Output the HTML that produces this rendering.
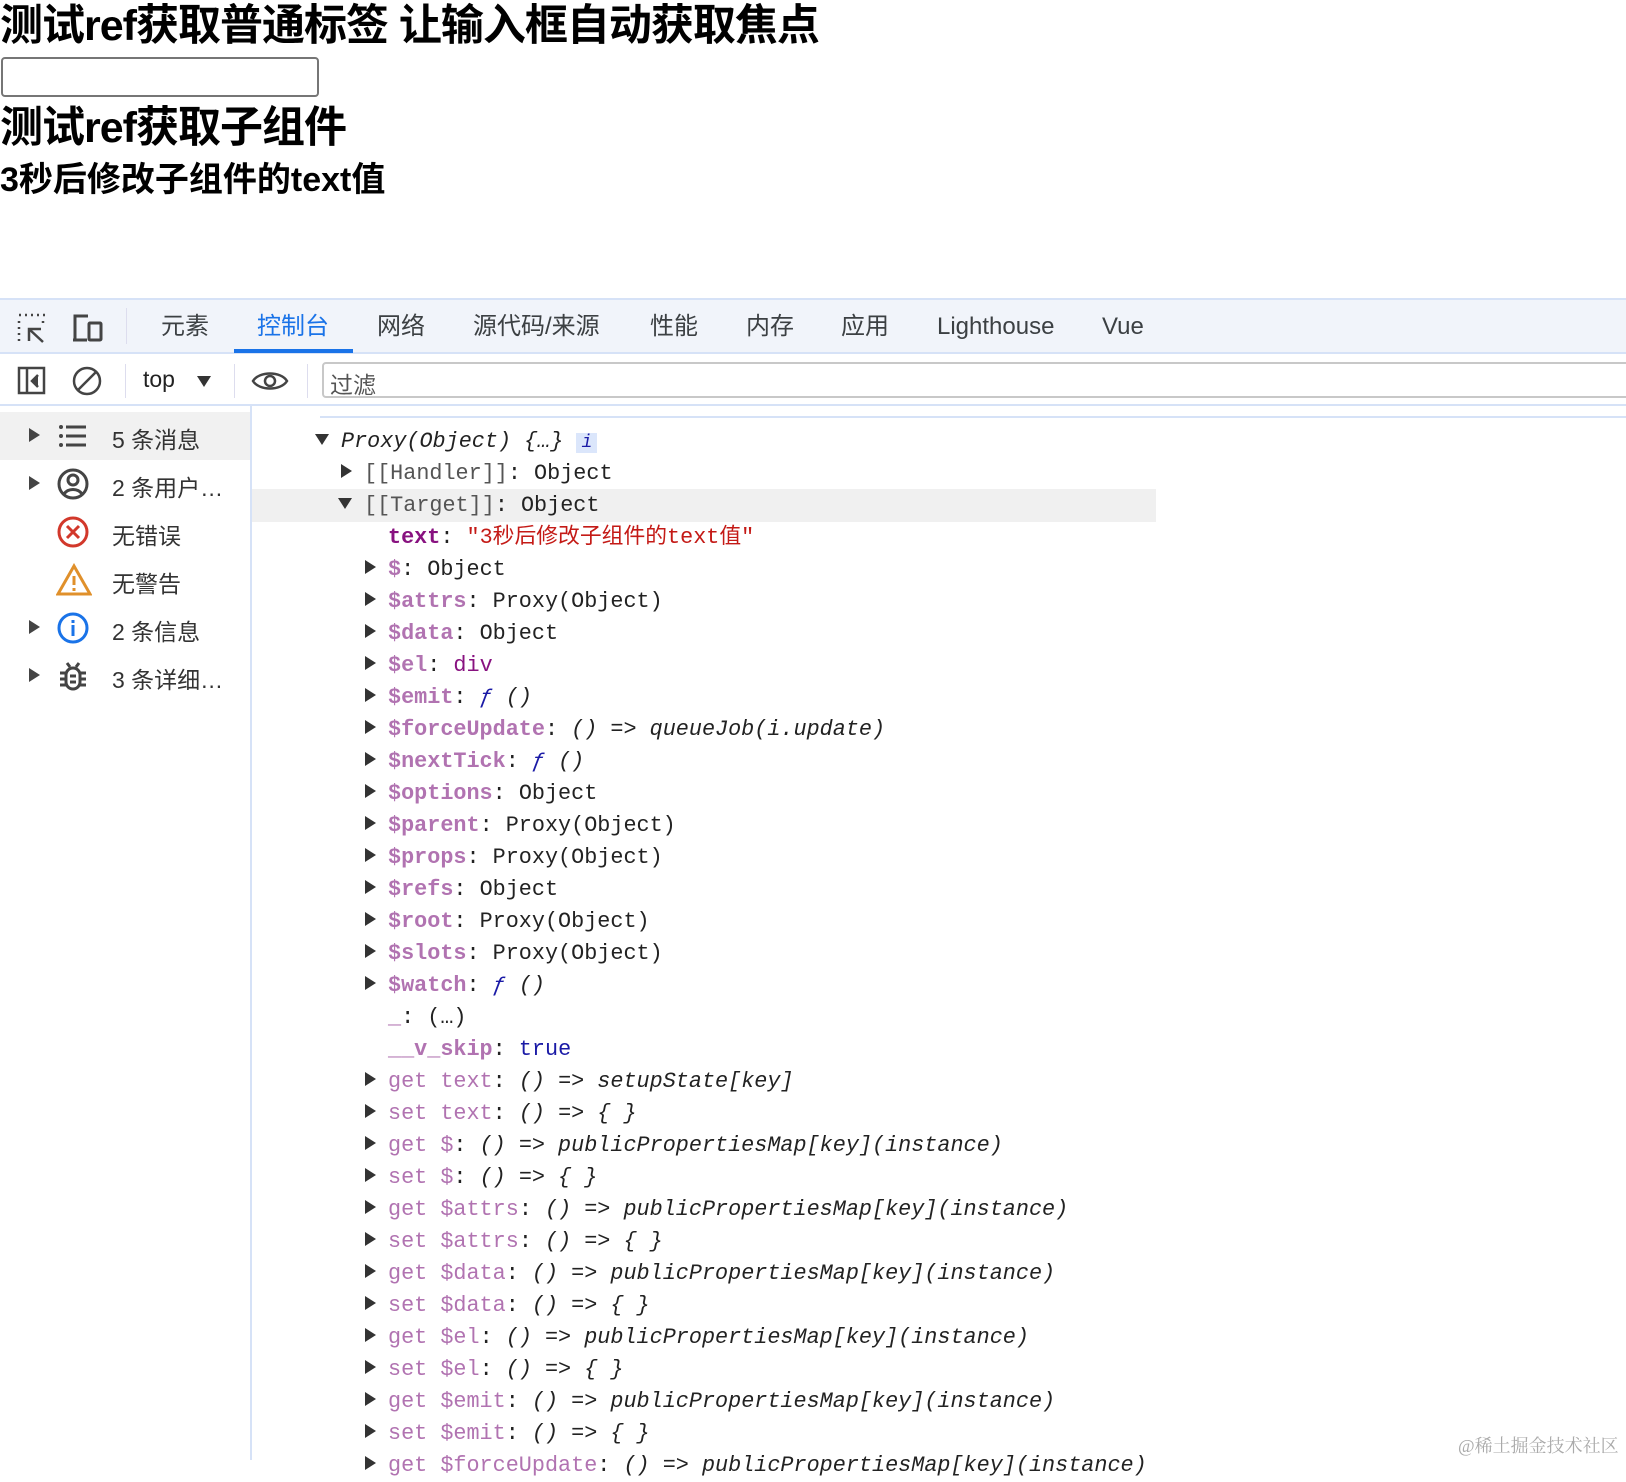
<!DOCTYPE html>
<html><head><meta charset="utf-8"><style>
*{box-sizing:border-box}
body{margin:0;width:1626px;height:1460px;overflow:hidden;background:#fff;font-family:"Liberation Sans","Noto Sans CJK SC",sans-serif;position:relative}
.a{position:absolute;white-space:nowrap}
h1,h3{margin:0;font-weight:bold;position:absolute;left:0;white-space:nowrap;letter-spacing:-1px}
.tab{position:absolute;top:312px;font-size:24px;color:#3c4043;line-height:30px}
.sb{position:absolute;left:0;width:250px;height:48px;font-size:23px;color:#333}
.sb .t{position:absolute;left:112px;top:9px}
.sb .ar{position:absolute;left:29px;top:16px;width:0;height:0;border-left:11px solid #444;border-top:7px solid transparent;border-bottom:7px solid transparent}
.sb svg{position:absolute;left:56px;top:7px}
.ln{position:absolute;font-family:"Liberation Mono","Noto Sans CJK SC",monospace;font-size:21.8px;line-height:32px;height:32px;white-space:nowrap;color:#222}
.tri{display:inline-block;width:0;height:0;border-left:11px solid #333;border-top:7px solid transparent;border-bottom:7px solid transparent;margin-right:12px;vertical-align:1px}
.trd{display:inline-block;width:0;height:0;border-top:11px solid #333;border-left:7px solid transparent;border-right:7px solid transparent;margin-right:12px;vertical-align:2px}
.k{color:#881280;font-weight:bold}
.kf{color:#b173b1;font-weight:bold}
.g{color:#b173b1}
.s{color:#c41a16}
.b{color:#1a1aa6}
i{font-style:italic}
.gr{color:#555}
</style></head><body>
<h1 style="top:0;font-size:43px;line-height:52px">测试ref获取普通标签 让输入框自动获取焦点</h1>
<div class="a" style="left:1px;top:57px;width:318px;height:40px;border:2px solid #767676;border-radius:4px"></div>
<h1 style="top:102px;font-size:43px;line-height:52px">测试ref获取子组件</h1>
<h3 style="top:160px;font-size:34px;line-height:40px;letter-spacing:0">3秒后修改子组件的text值</h3>

<!-- devtools -->
<div class="a" style="left:0;top:298px;width:1626px;height:56px;background:#f1f4fa;border-top:2px solid #d6e2f7;border-bottom:2px solid #d6e2f7"></div>
<svg class="a" style="left:16px;top:312px" width="32" height="32" viewBox="0 0 32 32" fill="none" stroke="#444" stroke-width="2.5"><path d="M3 3h2M9 3h2M15 3h2M21 3h2M27 3h2M3 9v2M3 15v2M3 21v2M3 27v2M27 9v2M13 29l0-12h12M13 17l14 13" /></svg>
<svg class="a" style="left:70px;top:312px" width="36" height="32" viewBox="0 0 36 32" fill="none" stroke="#444" stroke-width="3"><path d="M18 4H5v24h4M3 28h14"/><rect x="19" y="11" width="12" height="17" rx="1"/></svg>
<div class="a" style="left:126px;top:308px;width:1px;height:36px;background:#dde"></div>
<div class="tab" style="left:161px">元素</div>
<div class="tab" style="left:257px;color:#1a73e8">控制台</div>
<div class="a" style="left:234px;top:349px;width:119px;height:4px;background:#1a73e8"></div>
<div class="tab" style="left:377px">网络</div>
<div class="tab" style="left:473px">源代码/来源</div>
<div class="tab" style="left:650px">性能</div>
<div class="tab" style="left:746px">内存</div>
<div class="tab" style="left:841px">应用</div>
<div class="tab" style="left:937px">Lighthouse</div>
<div class="tab" style="left:1102px">Vue</div>

<div class="a" style="left:0;top:354px;width:1626px;height:52px;background:#fff;border-bottom:2px solid #d6e2f7"></div>
<svg class="a" style="left:17px;top:366px" width="30" height="30" viewBox="0 0 30 30" fill="none" stroke="#444" stroke-width="2.5"><rect x="2" y="2" width="25" height="25"/><path d="M10 2v25"/><path d="M21 9l-6 6 6 6" fill="#444"/></svg>
<svg class="a" style="left:71px;top:365px" width="32" height="32" viewBox="0 0 32 32" fill="none" stroke="#444" stroke-width="2.5"><circle cx="16" cy="16" r="13"/><path d="M7 25L25 7"/></svg>
<div class="a" style="left:125px;top:364px;width:1px;height:34px;background:#dde"></div>
<div class="a" style="left:143px;top:366px;font-size:23px;color:#222">top</div>
<div class="a" style="left:197px;top:376px;width:0;height:0;border-top:11px solid #333;border-left:7px solid transparent;border-right:7px solid transparent"></div>
<div class="a" style="left:234px;top:364px;width:1px;height:34px;background:#dde"></div>
<svg class="a" style="left:251px;top:368px" width="38" height="26" viewBox="0 0 38 26" fill="none" stroke="#444" stroke-width="2.5"><path d="M2 13C8 3 30 3 36 13C30 23 8 23 2 13Z"/><circle cx="19" cy="13" r="5"/></svg>
<div class="a" style="left:307px;top:364px;width:1px;height:34px;background:#dde"></div>
<div class="a" style="left:322px;top:362px;width:1320px;height:36px;border:2px solid #c8c8c8;border-radius:4px"></div>
<div class="a" style="left:330px;top:366px;font-size:23px;color:#555">过滤</div>

<!-- sidebar -->
<div class="a" style="left:250px;top:406px;width:2px;height:1054px;background:#d6e2f7"></div>
<div class="a" style="left:320px;top:416px;width:1306px;height:2px;background:#d6e2f7"></div>
<div class="sb" style="top:412px;background:#f1f1f1"><div class="ar"></div><svg width="34" height="34" viewBox="0 0 34 34" fill="#444"><circle cx="5" cy="8" r="2"/><circle cx="5" cy="17" r="2"/><circle cx="5" cy="26" r="2"/><rect x="10" y="6.5" width="20" height="3"/><rect x="10" y="15.5" width="20" height="3"/><rect x="10" y="24.5" width="20" height="3"/></svg><div class="t">5 条消息</div></div>
<div class="sb" style="top:460px"><div class="ar"></div><svg width="34" height="34" viewBox="0 0 34 34" fill="none" stroke="#444" stroke-width="3"><circle cx="17" cy="17" r="14"/><circle cx="17" cy="13" r="5"/><path d="M8 27c4-6 14-6 18 0"/></svg><div class="t">2 条用户…</div></div>
<div class="sb" style="top:508px"><svg width="34" height="34" viewBox="0 0 34 34" fill="none" stroke="#d2382b" stroke-width="3"><circle cx="17" cy="17" r="14"/><path d="M11 11l12 12M23 11L11 23"/></svg><div class="t">无错误</div></div>
<div class="sb" style="top:556px"><svg width="36" height="34" viewBox="0 0 36 34" fill="none" stroke="#e0902b" stroke-width="3"><path d="M18 3L34 31H2Z"/><path d="M18 13v9M18 25v3"/></svg><div class="t">无警告</div></div>
<div class="sb" style="top:604px"><div class="ar"></div><svg width="34" height="34" viewBox="0 0 34 34" fill="none" stroke="#1a73e8" stroke-width="3"><circle cx="17" cy="17" r="14"/><path d="M17 14v11M17 9v3"/></svg><div class="t">2 条信息</div></div>
<div class="sb" style="top:652px"><div class="ar"></div><svg width="34" height="34" viewBox="0 0 34 34" fill="none" stroke="#444" stroke-width="3"><path d="M11 4l3 4M23 4l-3 4"/><rect x="10" y="9" width="14" height="21" rx="7"/><path d="M4 14h6M24 14h6M4 20h6M24 20h6M4 26h6M24 26h6M14 17h6M14 23h6"/></svg><div class="t">3 条详细…</div></div>

<!-- console -->
<div class="a" style="left:252px;top:489px;width:904px;height:33px;background:#f0f0f0"></div>
<div class="ln" style="left:315px;top:426px"><span class="trd"></span><i>Proxy(Object) {…}</i> <span style="background:#dbe6fb;color:#1a1aa6;padding:0 5px;font-size:18px"><i>i</i></span></div>
<div class="ln" style="left:341px;top:458px"><span class="tri"></span><span class="gr">[[Handler]]</span>: Object</div>
<div class="ln" style="left:338px;top:490px"><span class="trd"></span><span class="gr">[[Target]]</span>: Object</div>
<div class="ln" style="left:388px;top:522px"><span class="k">text</span>: <span class="s">"3秒后修改子组件的text值"</span></div>
<div class="ln" style="left:365px;top:554px"><span class="tri"></span><span class="kf">$</span>: Object</div>
<div class="ln" style="left:365px;top:586px"><span class="tri"></span><span class="kf">$attrs</span>: Proxy(Object)</div>
<div class="ln" style="left:365px;top:618px"><span class="tri"></span><span class="kf">$data</span>: Object</div>
<div class="ln" style="left:365px;top:650px"><span class="tri"></span><span class="kf">$el</span>: <span style="color:#881280">div</span></div>
<div class="ln" style="left:365px;top:682px"><span class="tri"></span><span class="kf">$emit</span>: <i class="b">ƒ</i> <i>()</i></div>
<div class="ln" style="left:365px;top:714px"><span class="tri"></span><span class="kf">$forceUpdate</span>: <i>() =&gt; queueJob(i.update)</i></div>
<div class="ln" style="left:365px;top:746px"><span class="tri"></span><span class="kf">$nextTick</span>: <i class="b">ƒ</i> <i>()</i></div>
<div class="ln" style="left:365px;top:778px"><span class="tri"></span><span class="kf">$options</span>: Object</div>
<div class="ln" style="left:365px;top:810px"><span class="tri"></span><span class="kf">$parent</span>: Proxy(Object)</div>
<div class="ln" style="left:365px;top:842px"><span class="tri"></span><span class="kf">$props</span>: Proxy(Object)</div>
<div class="ln" style="left:365px;top:874px"><span class="tri"></span><span class="kf">$refs</span>: Object</div>
<div class="ln" style="left:365px;top:906px"><span class="tri"></span><span class="kf">$root</span>: Proxy(Object)</div>
<div class="ln" style="left:365px;top:938px"><span class="tri"></span><span class="kf">$slots</span>: Proxy(Object)</div>
<div class="ln" style="left:365px;top:970px"><span class="tri"></span><span class="kf">$watch</span>: <i class="b">ƒ</i> <i>()</i></div>
<div class="ln" style="left:388px;top:1002px"><span class="kf">_</span>:  (…)</div>
<div class="ln" style="left:388px;top:1034px"><span class="kf">__v_skip</span>: <span class="b">true</span></div>
<div class="ln" style="left:365px;top:1066px"><span class="tri"></span><span class="g">get text</span>: <i>() =&gt; setupState[key]</i></div>
<div class="ln" style="left:365px;top:1098px"><span class="tri"></span><span class="g">set text</span>: <i>() =&gt; { }</i></div>
<div class="ln" style="left:365px;top:1130px"><span class="tri"></span><span class="g">get $</span>: <i>() =&gt; publicPropertiesMap[key](instance)</i></div>
<div class="ln" style="left:365px;top:1162px"><span class="tri"></span><span class="g">set $</span>: <i>() =&gt; { }</i></div>
<div class="ln" style="left:365px;top:1194px"><span class="tri"></span><span class="g">get $attrs</span>: <i>() =&gt; publicPropertiesMap[key](instance)</i></div>
<div class="ln" style="left:365px;top:1226px"><span class="tri"></span><span class="g">set $attrs</span>: <i>() =&gt; { }</i></div>
<div class="ln" style="left:365px;top:1258px"><span class="tri"></span><span class="g">get $data</span>: <i>() =&gt; publicPropertiesMap[key](instance)</i></div>
<div class="ln" style="left:365px;top:1290px"><span class="tri"></span><span class="g">set $data</span>: <i>() =&gt; { }</i></div>
<div class="ln" style="left:365px;top:1322px"><span class="tri"></span><span class="g">get $el</span>: <i>() =&gt; publicPropertiesMap[key](instance)</i></div>
<div class="ln" style="left:365px;top:1354px"><span class="tri"></span><span class="g">set $el</span>: <i>() =&gt; { }</i></div>
<div class="ln" style="left:365px;top:1386px"><span class="tri"></span><span class="g">get $emit</span>: <i>() =&gt; publicPropertiesMap[key](instance)</i></div>
<div class="ln" style="left:365px;top:1418px"><span class="tri"></span><span class="g">set $emit</span>: <i>() =&gt; { }</i></div>
<div class="ln" style="left:365px;top:1450px"><span class="tri"></span><span class="g">get $forceUpdate</span>: <i>() =&gt; publicPropertiesMap[key](instance)</i></div>
<div class="a" style="left:1458px;top:1432px;font-size:18px;color:#aaa;font-family:'Liberation Serif','Noto Serif CJK SC',serif">@稀土掘金技术社区</div>
</body></html>
